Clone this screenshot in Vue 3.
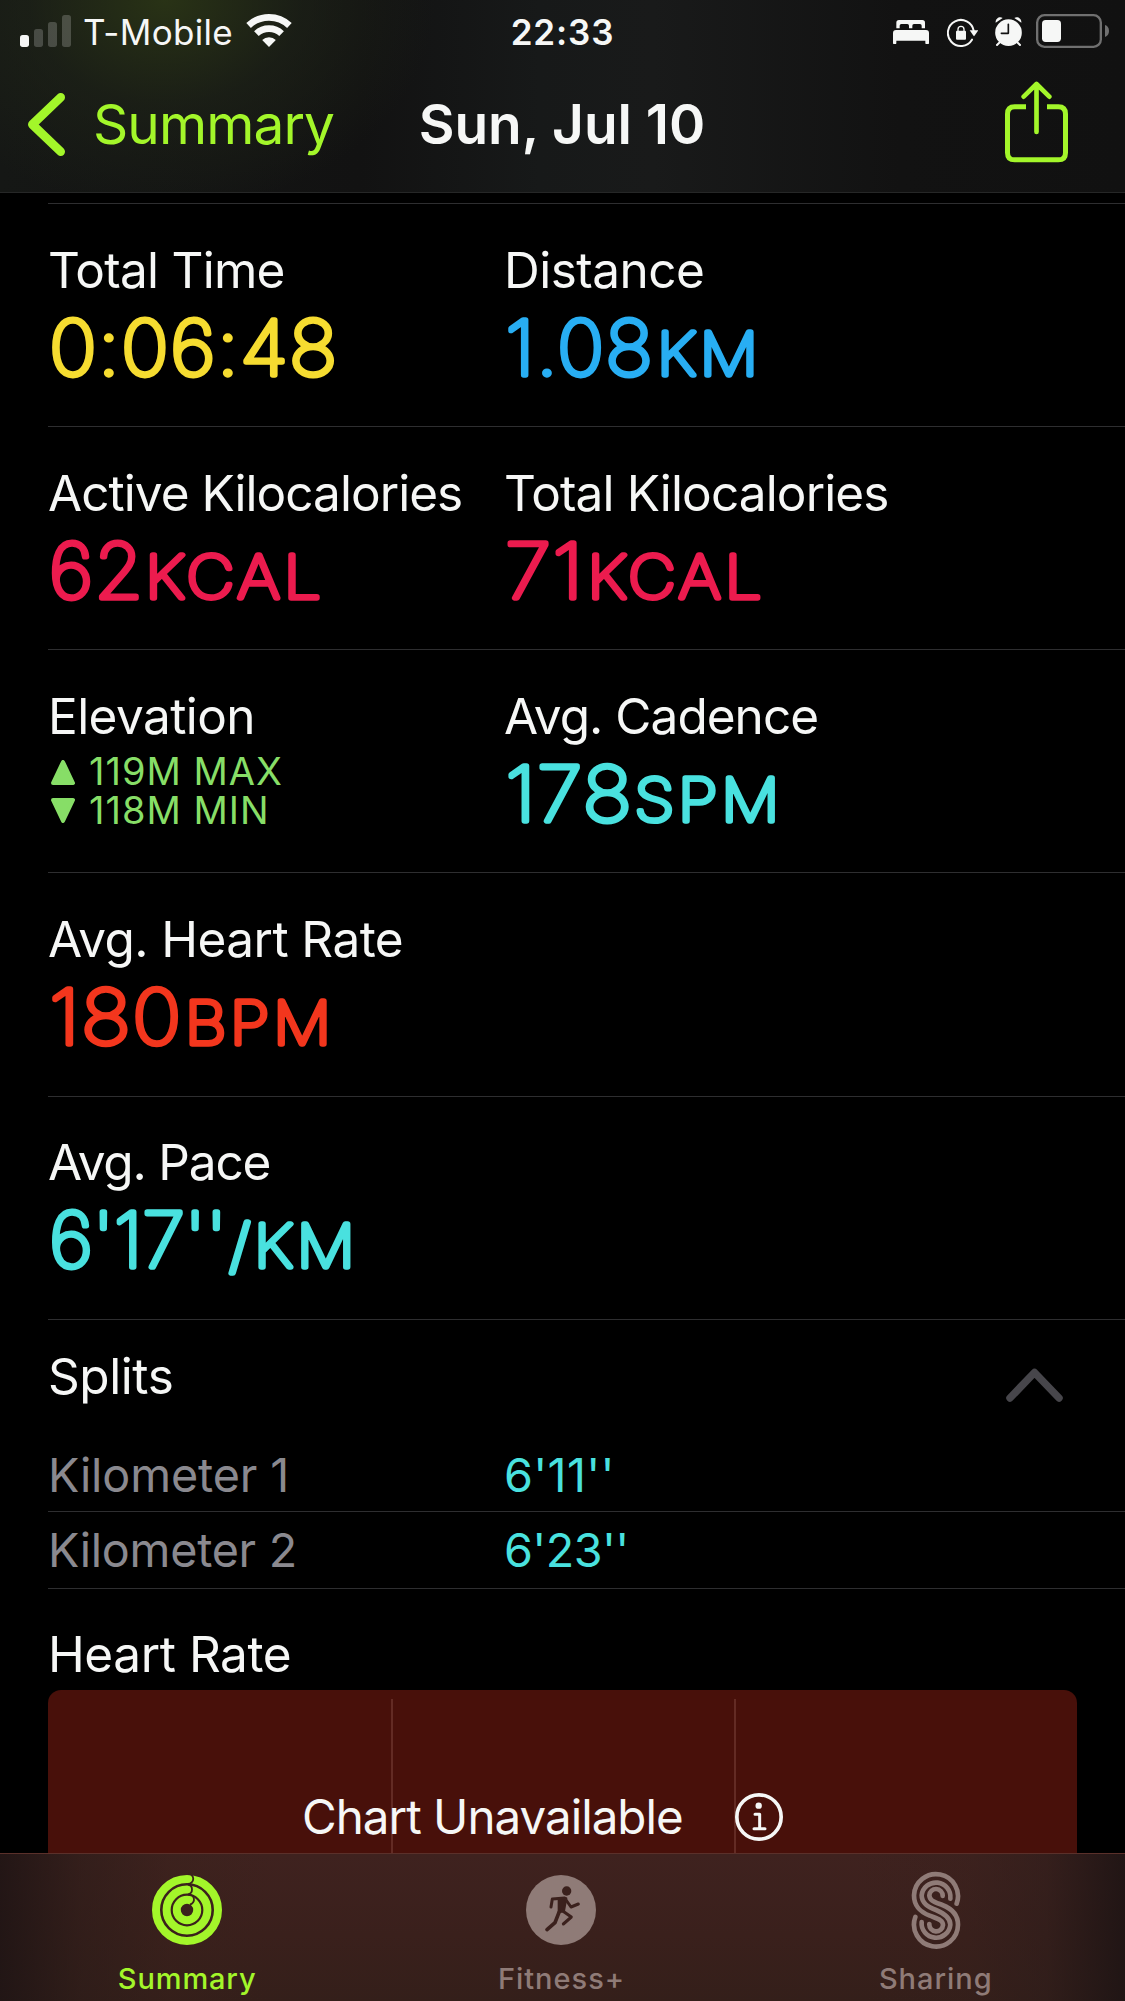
<template>
  <div class="screen">
    <header class="top">
      <div class="status">
        <div class="status-left">
          <svg class="bars" viewBox="60 39 153 102" width="51" height="34">
            <rect x="60" y="102" width="27" height="36" rx="8" />
            <rect class="dim" x="102" y="84" width="27" height="54" rx="8" />
            <rect class="dim" x="144" y="63" width="27" height="75" rx="8" />
            <rect class="dim" x="186" y="42" width="27" height="96" rx="8" />
          </svg>
          <span class="carrier">T-Mobile</span>
          <svg class="wifi" viewBox="738 39 138 102" width="46" height="34">
            <path class="arc" d="M745.8 73.5A89 89 0 0 1 868.2 73.5" />
            <path class="arc" d="M769.2 98.1A55 55 0 0 1 844.8 98.1" />
            <path d="M807 138L786.5 117A30 30 0 0 1 827.5 117Z" />
          </svg>
        </div>
        <span class="clock">22:33</span>
        <div class="status-right">
          <svg viewBox="429 39 108 102" width="36" height="34">
            <path d="M439 82V65q0-8 8-8h70q8 0 8 8v17h-10v-8q0-5-5-5h-18q-5 0-5 5v8h-10v-8q0-5-5-5h-18q-5 0-5 5v8z" />
            <path d="M429 127V96q0-9 9-9h90q9 0 9 9v31q0 2-2 2h-7q-2 0-2-2v-8h-87v8q0 2-2 2h-6q-2 0-2-2z" />
          </svg>
          <svg class="lock" viewBox="591 39 93 102" width="31" height="34">
            <path class="ring" d="M666 116A39 39 0 1 1 671 89" />
            <path d="M659 88h26l-12 17q-1 1-2 0z" />
            <rect x="618" y="89" width="30" height="27" rx="3" />
            <path class="shackle" d="M624 91v-6a9 9 0 0 1 18 0v6" />
          </svg>
          <svg class="alarm" viewBox="735 39 81 102" width="27" height="34">
            <circle cx="775.5" cy="95" r="40" />
            <path d="M737 65c-1-12 11-20 21-14z M814 65c1-12-11-20-21-14z" />
            <path class="leg" d="M741 132l9-9M810 132l-9-9" />
            <path class="hands" d="M775 70v27h-21" />
          </svg>
          <svg class="battery" viewBox="858 39 219 102" width="73" height="34">
            <rect class="case" x="861.5" y="42.5" width="191" height="95" rx="22" />
            <rect x="876" y="57" width="57" height="66" rx="11" />
            <path class="nub" d="M1065 72q12 4 12 18t-12 18z" />
          </svg>
        </div>
      </div>
      <nav class="nav">
        <a class="back">
          <svg viewBox="84 279 111 189" width="37" height="63">
            <path d="M182 292L97 373.5L182 455" />
          </svg>
          <span>Summary</span>
        </a>
        <h1>Sun, Jul 10</h1>
        <svg class="share" viewBox="765 242 189 246" width="63" height="82">
          <path d="M828 319.5H794q-21.500 0-21.500 21.500v116q0 21.500 21.500 21.500h131q21.500 0 21.500-21.500v-116q0-21.500-21.500-21.500h-34" />
          <path class="arrow" d="M859.500 254V395M821 289L859.500 251L898 289" />
        </svg>
      </nav>
    </header>

    <main class="content">
      <section v-for="(row, i) in rows" :key="i" class="row">
        <div v-for="m in row" :key="m.label" class="metric">
          <div class="label" :style="{ letterSpacing: m.tracking + 'em' }">{{ m.label }}</div>
          <div v-if="m.range" class="range">
            <div class="range-line">
              <svg viewBox="0 0 24 25" width="24" height="25"><path d="M12 2L22 23H2z" /></svg>
              <span>{{ m.range[0] }}</span>
            </div>
            <div class="range-line down">
              <svg viewBox="0 0 24 25" width="24" height="25"><path d="M12 23L22 2H2z" /></svg>
              <span>{{ m.range[1] }}</span>
            </div>
          </div>
          <svg v-else class="value" :class="m.color" width="400" height="90">
            <text class="digits" :class="{ tight: m.tight }" :transform="place(m.at)">{{ m.value }}</text>
            <text v-if="m.unit" class="unit" :transform="place(m.unitAt)">{{ m.unit }}</text>
          </svg>
        </div>
      </section>

      <section class="splits">
        <div class="splits-head">
          <div class="label">Splits</div>
          <svg class="chevron" viewBox="0 0 57 34" width="57" height="34">
            <path d="M4 30L28.500 4.500L53 30" />
          </svg>
        </div>
        <div v-for="s in splits" :key="s.name" class="split">
          <span class="split-name" :style="{ letterSpacing: s.nameTracking + 'em' }">{{ s.name }}</span>
          <span class="split-pace" :style="{ letterSpacing: s.paceTracking + 'em' }">{{ s.pace }}</span>
        </div>
      </section>

      <section class="heart">
        <div class="label">Heart Rate</div>
        <div class="chart">
          <div v-for="n in 3" :key="n" class="chart-col"></div>
          <div class="chart-message">
            <span>Chart Unavailable</span>
            <svg viewBox="0 0 144 144" width="48" height="48">
              <circle class="info-ring" cx="72" cy="72" r="66.500" />
              <circle cx="71" cy="38" r="9.500" />
              <path class="info-stem" d="M60 64H74V107M57 107H90" />
            </svg>
          </div>
        </div>
      </section>
    </main>

    <footer class="tabs">
      <div class="tab active">
        <svg viewBox="-35 -40 70 80" width="70" height="80">
          <circle class="activity" r="31" />
          <circle class="activity" r="20.400" />
          <circle class="activity" r="10.200" />
          <path class="notch" d="M1-36.500A5 5 0 0 1 1-26M1-25.500A5 5 0 0 1 1-15.700M1-15.300A5 5 0 0 1 3-5.500" />
        </svg>
        <span>Summary</span>
      </div>
      <div class="tab fitness">
        <svg viewBox="0 -15 210 240" width="70" height="80">
          <circle cx="105" cy="105" r="105" />
          <g class="runner">
            <circle cx="122" cy="48" r="14" />
            <path class="torso" d="M98 70L121 70L114 108L98 113Z" />
            <path class="limb" d="M75 96L79 72L116 69L135 96L157 87" />
            <path class="limb" d="M107 106L136 126L112 147" />
            <path class="limb back-leg" d="M99 112L87 143L63 164" />
          </g>
        </svg>
        <span>Fitness+</span>
      </div>
      <div class="tab sharing">
        <svg viewBox="331 630 156 240" width="52" height="80">
          <path d="M471 731A66 66 0 1 0 343 706C343 742 365 757 390 767S430 780 430 795A20 20 0 0 1 389 792" />
          <path d="M452 716A43 43 0 1 0 366 706C366 730 385 740 409 750S452 772 452 794A43 43 0 1 1 366 786" />
          <path d="M429 708A20 20 0 0 0 389 706C389 722 405 726 428 735S475 762 475 794A66 66 0 1 1 347 771" />
        </svg>
        <span>Sharing</span>
      </div>
    </footer>
  </div>
</template>

<script setup>
// at / unitAt: [x offset, horizontal stretch] of the rounded numerals
const rows = [
  [
    { label: 'Total Time', tracking: -0.0148, value: '0:06:48', color: 'yellow', at: [1.2, 1.064] },
    { label: 'Distance', tracking: -0.0104, value: '1.08', unit: 'KM', color: 'blue', at: [1.6, 1.051], unitAt: [152.9, 1.112] }
  ],
  [
    { label: 'Active Kilocalories', tracking: -0.0195, value: '62', unit: 'KCAL', color: 'pink', at: [1, 1.038], unitAt: [97.3, 1.127] },
    { label: 'Total Kilocalories', tracking: -0.0176, value: '71', unit: 'KCAL', color: 'pink', at: [1.2, 1.11], unitAt: [83.4, 1.118] }
  ],
  [
    { label: 'Elevation', tracking: -0.0115, range: ['119M MAX', '118M MIN'] },
    { label: 'Avg. Cadence', tracking: -0.0195, value: '178', unit: 'SPM', color: 'teal', at: [1.6, 1.091], unitAt: [130.4, 1.108] }
  ],
  [
    { label: 'Avg. Heart Rate', tracking: -0.0115, value: '180', unit: 'BPM', color: 'red', at: [1.2, 1.1], unitAt: [136.9, 1.103] }
  ],
  [
    { label: 'Avg. Pace', tracking: -0.0235, value: "6'17''", unit: '/KM', color: 'teal', tight: true, at: [1.2, 1.027], unitAt: [181.2, 1.107] }
  ]
]

const splits = [
  { name: 'Kilometer 1', nameTracking: -0.003, pace: "6'11''", paceTracking: 0.0072 },
  { name: 'Kilometer 2', nameTracking: -0.006, pace: "6'23''", paceTracking: -0.0125 }
]

const place = ([x, stretch]) => `translate(${x} 75.3) scale(${stretch} 1)`
</script>

<style>
body {
  background: #000;
}
</style>

<style scoped>
.screen {
  display: flex;
  flex-direction: column;
  width: 1125px;
  height: 2001px;
  overflow: hidden;
  background: #000;
  color: #f6f7f6;
  font-family: Inter, "Liberation Sans", sans-serif;
}

svg {
  display: block;
  flex: none;
}

/* Header */
.top {
  flex: none;
  height: 192px;
  border-bottom: 1px solid #262727;
  background:
    radial-gradient(ellipse 270px 210px at 165px 0, rgba(42, 52, 22, 0.95), rgba(32, 38, 24, 0.55) 50%, rgba(24, 28, 22, 0) 100%),
    linear-gradient(90deg, #151715 0, #121212 32%, #171919 48%, #191a1a 58%, #121212 80%, #111 100%);
}

.status {
  display: grid;
  grid-template-columns: 1fr auto 1fr;
  align-items: center;
  height: 60px;
  padding: 0 16px;
  font-size: 35px;
  line-height: 60px;
}

.status svg {
  fill: #f6f7f6;
}

.status-left,
.status-right {
  display: flex;
  align-items: center;
}

.status-left {
  padding-left: 4px;
}

.bars .dim {
  fill: rgba(255, 255, 255, 0.2);
}

.carrier {
  margin: 2px 0 0 12px;
  letter-spacing: 0.009em;
}

.wifi {
  margin-left: 13px;
}

.wifi .arc {
  fill: none;
  stroke: #f6f7f6;
  stroke-width: 20;
}

.clock {
  margin-top: 2px;
  font-weight: 600;
  letter-spacing: 0.0247em;
}

.status-right {
  justify-content: flex-end;
}

.lock {
  margin-left: 18px;
}

.lock .ring,
.lock .shackle {
  fill: none;
  stroke: #f6f7f6;
  stroke-width: 6;
  stroke-linecap: round;
}

.lock .shackle {
  stroke-width: 4;
}

.alarm {
  margin-left: 17px;
}

.alarm .leg {
  stroke: #f6f7f6;
  stroke-width: 6;
  stroke-linecap: round;
}

.alarm .hands {
  fill: none;
  stroke: #121212;
  stroke-width: 5;
  stroke-linecap: round;
  stroke-linejoin: round;
}

.battery {
  margin-left: 14px;
}

.battery .case {
  fill: none;
  stroke: #707070;
  stroke-width: 7;
}

.battery .nub {
  fill: #707070;
}

.nav {
  display: grid;
  grid-template-columns: 1fr auto 1fr;
  align-items: center;
  height: 128px;
  padding: 0 57px 0 28px;
  font-size: 55px;
  line-height: 66px;
}

.back {
  display: flex;
  align-items: center;
  gap: 28px;
  color: #a3f62a;
  letter-spacing: -0.017em;
}

.back path,
.share path {
  fill: none;
  stroke: #a3f62a;
  stroke-width: 26;
  stroke-linecap: round;
  stroke-linejoin: round;
}

.nav h1 {
  margin: 0 -28px 0 0;
  font-size: 55px;
  font-weight: 600;
}

.share {
  justify-self: end;
  margin-bottom: 5px;
}

.share path {
  stroke-width: 15;
  stroke-linecap: butt;
}

.share .arrow {
  stroke-linecap: round;
  stroke-width: 14;
}

/* Metrics */
.content {
  flex: 1;
  min-height: 0;
  overflow: hidden;
  padding: 10px 0 0 48px;
}

.row {
  display: grid;
  grid-template-columns: 456px 1fr;
  box-sizing: border-box;
  height: 223px;
  padding-top: 36px;
  border-top: 1px solid #2e2e30;
}

.row:nth-child(4) {
  height: 224px;
}

.row:nth-child(5) {
  padding-top: 35px;
}

.label {
  font-size: 49.5px;
  line-height: 60px;
  letter-spacing: -0.0085em;
  white-space: nowrap;
}

.value {
  overflow: visible;
  stroke: currentColor;
  stroke-width: 5.6;
  stroke-linejoin: round;
  fill: currentColor;
  font-weight: 100;
}

.value text {
  vector-effect: non-scaling-stroke;
}

.digits {
  font-size: 75.2px;
  letter-spacing: 1.5px;
}

.digits.tight {
  letter-spacing: 0;
}

.unit {
  font-size: 58.6px;
  letter-spacing: 3.5px;
}

.yellow {
  color: #f6dc30;
}

.blue {
  color: #28aef3;
}

.pink {
  color: #ec1b4e;
}

.teal {
  color: #49e1df;
}

.red {
  color: #f3361d;
}

.range {
  margin-top: 6px;
  color: #87de67;
  font-size: 38px;
  line-height: 39px;
  letter-spacing: 0.0263em;
}

.range-line {
  display: flex;
  align-items: flex-end;
  gap: 14px;
  height: 39px;
  padding-left: 3px;
}

.range-line svg {
  margin-bottom: 6px;
  fill: #87de67;
  stroke: #87de67;
  stroke-width: 4;
  stroke-linejoin: round;
}

.range-line.down svg {
  margin-bottom: 7px;
}

/* Splits */
.splits {
  border-top: 1px solid #2e2e30;
}

.splits-head {
  display: flex;
  justify-content: space-between;
  box-sizing: border-box;
  height: 115px;
  padding: 26px 62px 0 0;
}

.chevron {
  margin-top: 22px;
}

.chevron path {
  fill: none;
  stroke: #47464b;
  stroke-width: 7.5;
  stroke-linecap: round;
  stroke-linejoin: round;
}

.split {
  display: grid;
  grid-template-columns: 456px 1fr;
  box-sizing: border-box;
  height: 77px;
  border-bottom: 1px solid #2e2e30;
  font-size: 46.7px;
  line-height: 76px;
}

.splits-head + .split {
  padding-top: 2px;
  line-height: 74px;
}

.splits-head + .split span {
  margin-top: 1px;
}

.split-name {
  color: #8a898f;
}

.split-pace {
  color: #49e1df;
}

/* Heart rate chart */
.heart {
  padding: 35px 48px 0 0;
}

.chart {
  position: relative;
  display: grid;
  grid-template-columns: repeat(3, 1fr);
  height: 300px;
  margin-top: 6px;
  border-radius: 13px;
  background: #48100a;
}

.chart-col {
  margin-top: 9px;
}

.chart-col + .chart-col {
  border-left: 2px solid #632b24;
}

.chart-message {
  position: absolute;
  top: 98px;
  left: 254px;
  display: flex;
  align-items: center;
  gap: 52px;
  font-size: 47.5px;
  line-height: 58px;
  letter-spacing: -0.0208em;
  white-space: nowrap;
}

.chart-message svg {
  fill: #f6f7f6;
}

.info-ring,
.info-stem {
  fill: none;
  stroke: #f6f7f6;
  stroke-width: 11;
}

.info-stem {
  stroke-width: 9;
  stroke-linecap: round;
  stroke-linejoin: round;
}

/* Tab bar */
.tabs {
  flex: none;
  display: grid;
  grid-template-columns: repeat(3, 1fr);
  box-sizing: border-box;
  height: 148px;
  padding-right: 2px;
  border-top: 1px solid #5b302a;
  background:
    linear-gradient(90deg, rgba(30, 20, 20, 0.85) 0, rgba(42, 27, 24, 0.55) 7%, rgba(56, 33, 27, 0.3) 15%, rgba(60, 33, 30, 0) 24%, rgba(60, 33, 30, 0) 76%, rgba(54, 32, 28, 0.3) 86%, rgba(44, 28, 26, 0.5) 93%, rgba(30, 20, 20, 0.9) 100%),
    linear-gradient(180deg, #3f221f 0, #3a201c 55%, #341f1a 100%);
}

.tab {
  display: flex;
  flex-direction: column;
  align-items: center;
  gap: 11px;
  padding-top: 16px;
  color: #8f7b77;
  font-size: 29px;
  font-weight: 500;
  line-height: 36px;
  letter-spacing: 0.034em;
}

.tab.active {
  color: #a3f62a;
  letter-spacing: 0.03em;
}

.activity {
  fill: none;
  stroke: #a3f62a;
  stroke-width: 8;
}

.notch {
  fill: none;
  stroke: #3a211c;
  stroke-width: 1.8;
}

.fitness svg {
  fill: #8f7b77;
}

.runner {
  fill: #3b211d;
  stroke-linecap: round;
  stroke-linejoin: round;
}

.torso {
  stroke: #3b211d;
  stroke-width: 6;
}

.limb {
  fill: none;
  stroke: #3b211d;
  stroke-width: 9;
}

.back-leg {
  stroke-width: 11;
}

.sharing path {
  fill: none;
  stroke: #8f7b77;
  stroke-width: 14;
  stroke-linecap: round;
}
</style>
